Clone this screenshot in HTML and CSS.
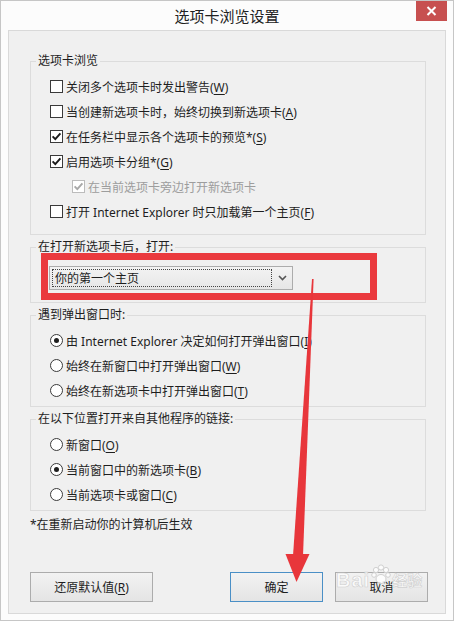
FILE: index.html
```html
<!DOCTYPE html>
<html lang="zh-CN">
<head>
<meta charset="utf-8">
<title>选项卡浏览设置</title>
<link rel="stylesheet" href="styles.css">
</head>
<body>
<div class="window">
  <div class="titlebar">
    <div></div>
    <div class="title">选项卡浏览设置</div>
    <div class="close">
      <svg width="31" height="20" viewBox="0 0 31 20"><path d="M11.5 6 L19.5 14 M19.5 6 L11.5 14" stroke="#fff" stroke-width="2" fill="none"/></svg>
    </div>
  </div>
  <div class="panel">
    <fieldset class="group g1">
      <legend>选项卡浏览</legend>
      <div class="opts">
        <div class="opt"><span class="cb"></span><span>关闭多个选项卡时发出警告(<u>W</u>)</span></div>
        <div class="opt"><span class="cb"></span><span>当创建新选项卡时，始终切换到新选项卡(<u>A</u>)</span></div>
        <div class="opt"><span class="cb on"><svg width="11" height="11" viewBox="0 0 11 11"><path d="M1.6 5.4 L4.3 8.2 L9.4 2.4" stroke="#1a1a1a" stroke-width="1.9" fill="none"/></svg></span><span>在任务栏中显示各个选项卡的预览*(<u>S</u>)</span></div>
        <div class="opt"><span class="cb on"><svg width="11" height="11" viewBox="0 0 11 11"><path d="M1.6 5.4 L4.3 8.2 L9.4 2.4" stroke="#1a1a1a" stroke-width="1.9" fill="none"/></svg></span><span>启用选项卡分组*(<u>G</u>)</span></div>
        <div class="opt sub disabled"><span class="cb on"><svg width="11" height="11" viewBox="0 0 11 11"><path d="M1.6 5.4 L4.3 8.2 L9.4 2.4" stroke="#a8a8a8" stroke-width="1.9" fill="none"/></svg></span><span>在当前选项卡旁边打开新选项卡</span></div>
        <div class="opt"><span class="cb"></span><span>打开 Internet Explorer 时只加载第一个主页(<u>F</u>)</span></div>
      </div>
    </fieldset>
    <fieldset class="group g2">
      <legend>在打开新选项卡后，打开:</legend>
      <div class="combo">
        <span class="val">你的第一个主页</span>
        <span class="drop"><svg width="9" height="6" viewBox="0 0 9 6"><path d="M1 1 L4.5 4.5 L8 1" stroke="#555" stroke-width="1.6" fill="none"/></svg></span>
      </div>
    </fieldset>
    <fieldset class="group g3">
      <legend>遇到弹出窗口时:</legend>
      <div class="opts">
        <div class="opt"><span class="rb on"></span><span>由 Internet Explorer 决定如何打开弹出窗口(<u>I</u>)</span></div>
        <div class="opt"><span class="rb"></span><span>始终在新窗口中打开弹出窗口(<u>W</u>)</span></div>
        <div class="opt"><span class="rb"></span><span>始终在新选项卡中打开弹出窗口(<u>T</u>)</span></div>
      </div>
    </fieldset>
    <fieldset class="group g4">
      <legend>在以下位置打开来自其他程序的链接:</legend>
      <div class="opts">
        <div class="opt"><span class="rb"></span><span>新窗口(<u>O</u>)</span></div>
        <div class="opt"><span class="rb on"></span><span>当前窗口中的新选项卡(<u>B</u>)</span></div>
        <div class="opt"><span class="rb"></span><span>当前选项卡或窗口(<u>C</u>)</span></div>
      </div>
    </fieldset>
    <p class="note">*在重新启动你的计算机后生效</p>
    <div class="buttons">
      <button class="btn btn-reset">还原默认值(<u>R</u>)</button>
      <button class="btn btn-ok">确定</button>
      <button class="btn btn-cancel">取消</button>
    </div>
  </div>

  <div class="highlight"></div>
  <svg class="arrow" width="454" height="621" viewBox="0 0 454 621">
    <polygon points="312,279 313.6,279 303,556 293,556" fill="#e8363b"/>
    <polygon points="285.5,554 309.5,554 296.5,582" fill="#e8363b"/>
  </svg>
  <div class="watermark">
    <span class="wm-bai">Bai</span>
    <svg class="wm-paw" width="20" height="24" viewBox="0 0 20 24">
      <g fill="rgba(255,255,255,0.8)" stroke="#d0d0d0" stroke-width="1">
        <circle cx="5" cy="6" r="2.6"/>
        <circle cx="10" cy="3.5" r="2.6"/>
        <circle cx="15" cy="6" r="2.6"/>
        <circle cx="3" cy="11" r="2.3"/>
        <circle cx="17" cy="11" r="2.3"/>
        <ellipse cx="10" cy="15" rx="5" ry="4.5"/>
      </g>
    </svg>
    <span class="wm-jy">经验</span>
  </div>
</div>
</body>
</html>
```

FILE: styles.css
```css
html, body {
  margin: 0;
  padding: 0;
  background: #fbfbfb;
}

body {
  font-family: "Noto Sans", "Noto Sans CJK SC", sans-serif;
  font-size: 12px;
  color: #1e1e1e;
}

.window {
  position: relative;
  width: 454px;
  height: 621px;
  box-sizing: border-box;
  border: 1px solid #c6c6c6;
  background: #fcfcfc;
  overflow: hidden;
}

.titlebar {
  height: 29px;
  display: grid;
  grid-template-columns: 1fr auto 1fr;
  align-items: center;
}

.title {
  font-size: 15px;
  color: #222;
  line-height: 20px;
}

.close {
  justify-self: end;
  align-self: start;
  margin-right: 6px;
  width: 31px;
  height: 20px;
  background: #c75050;
  display: flex;
}

.panel {
  margin: 0 7px;
  border: 1px solid #d9d9d9;
  background: #f0f0f0;
  padding: 22px 19px 11px 21px;
}

.group {
  margin: 0 0 4px;
  border: 1px solid #dcdcdc;
  padding: 5px 0 3px 0;
  min-width: 0;
}

.group legend {
  margin-left: 5px;
  padding: 0 2px;
  font-size: 12px;
  line-height: 16px;
  color: #1e1e1e;
}

.g1 {
  padding-bottom: 10px;
}

.g2 {
  padding-top: 11px;
  padding-bottom: 12px;
}

.opts {
  padding-left: 19px;
}

.opt {
  display: flex;
  align-items: center;
  gap: 3px;
  height: 25px;
  white-space: nowrap;
}

.opt.sub {
  padding-left: 22px;
}

.opt.disabled {
  color: #9d9d9d;
}

.cb {
  width: 13px;
  height: 13px;
  box-sizing: border-box;
  border: 1px solid #3a3a3a;
  background: #fff;
  display: flex;
  align-items: center;
  justify-content: center;
  flex: none;
}

.opt.disabled .cb {
  border-color: #bcbcbc;
}

.rb {
  width: 13px;
  height: 13px;
  box-sizing: border-box;
  border: 1px solid #3a3a3a;
  border-radius: 50%;
  background: #fff;
  display: flex;
  align-items: center;
  justify-content: center;
  flex: none;
}

.rb.on::after {
  content: "";
  width: 5px;
  height: 5px;
  border-radius: 50%;
  background: #1e1e1e;
}

u {
  text-decoration: underline;
  text-underline-offset: 2px;
}

.combo {
  margin-left: 18px;
  width: 244px;
  height: 24px;
  box-sizing: border-box;
  border: 1px solid #acacac;
  background: linear-gradient(#f3f3f3, #e6e6e6);
  display: flex;
  align-items: center;
  padding: 2px 0 2px 2px;
}

.combo .val {
  flex: 1;
  height: 18px;
  box-sizing: border-box;
  border: 1px dotted #444;
  display: flex;
  align-items: center;
  padding-left: 2px;
}

.combo .drop {
  width: 20px;
  display: flex;
  align-items: center;
  justify-content: center;
}

.note {
  margin: 6px 0 0;
  line-height: 16px;
}

.buttons {
  margin-top: 39px;
  margin-right: -2px;
  display: flex;
  gap: 12px;
}

.btn {
  height: 30px;
  box-sizing: border-box;
  border: 1px solid #acacac;
  background: linear-gradient(#f2f2f2, #e4e4e4);
  font-family: "Noto Sans", "Noto Sans CJK SC", sans-serif;
  font-size: 12px;
  color: #1e1e1e;
  padding: 0;
}

.btn-reset {
  width: 123px;
}

.btn-ok {
  width: 93px;
  margin-left: auto;
  border-color: #4a8fc6;
}

.btn-cancel {
  width: 93px;
}

.highlight {
  position: absolute;
  left: 40px;
  top: 252px;
  width: 336px;
  height: 47px;
  box-sizing: border-box;
  border: 7px solid #ea3a3e;
}

.arrow {
  position: absolute;
  left: -1px;
  top: -1px;
  pointer-events: none;
}

.watermark {
  position: absolute;
  left: 335px;
  top: 563px;
  display: flex;
  align-items: flex-end;
  gap: 1px;
  pointer-events: none;
}

.wm-bai {
  font-family: "Liberation Sans", sans-serif;
  font-weight: bold;
  font-size: 20px;
  line-height: 24px;
  color: rgba(255, 255, 255, 0.75);
  -webkit-text-stroke: 0.6px #cfcfcf;
  letter-spacing: 1px;
}

.wm-paw {
  margin-bottom: 4px;
}

.wm-jy {
  font-family: "Noto Sans CJK SC", sans-serif;
  font-weight: bold;
  font-size: 15px;
  line-height: 24px;
  color: rgba(255, 255, 255, 0.75);
  -webkit-text-stroke: 0.6px #cfcfcf;
}
```
